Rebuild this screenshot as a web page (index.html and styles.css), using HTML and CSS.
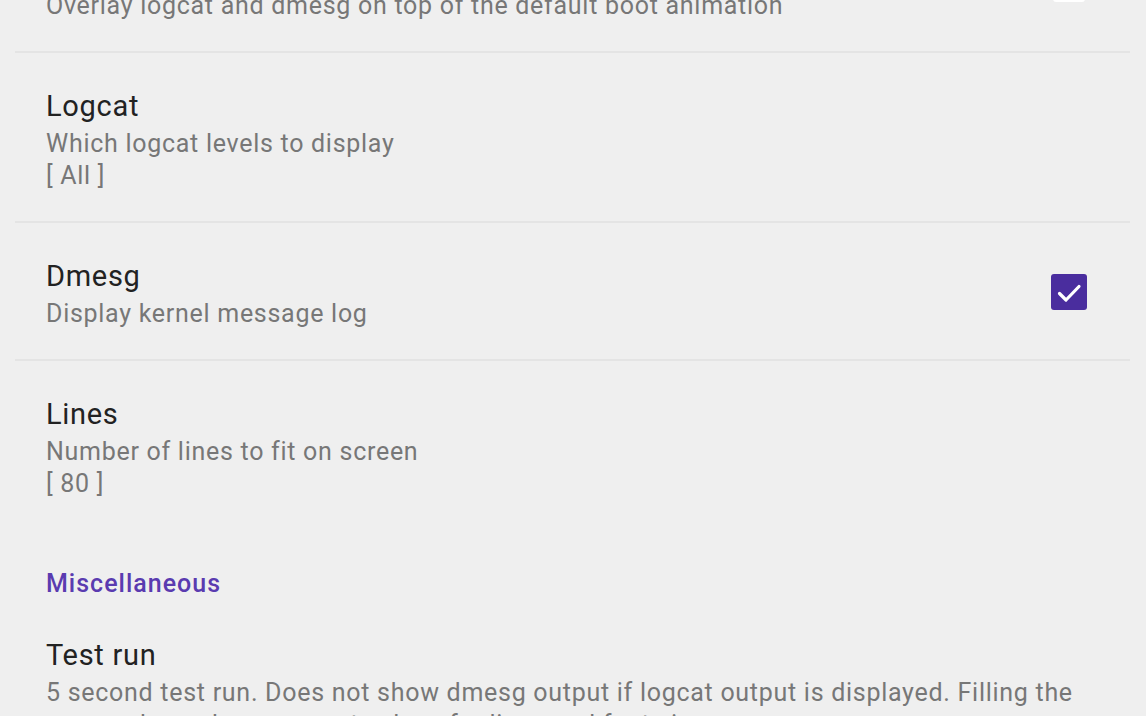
FILE: index.html
```html
<!DOCTYPE html>
<html lang="en">
<head>
  <meta charset="UTF-8">
  <meta name="viewport" content="width=device-width, initial-scale=1.0">
  <title>Boot animation settings</title>
  <link rel="stylesheet" href="styles.css">
</head>
<body>

<div class="prefs">
  <div class="pref">
    <div class="pref-text">
      <div class="pref-title">Show logs</div>
      <div class="pref-summary">Overlay logcat and dmesg on top of the default boot animation</div>
    </div>
    <span class="check check-white"></span>
  </div>
  <div class="divider"></div>

  <div class="pref">
    <div class="pref-text">
      <div class="pref-title">Logcat</div>
      <div class="pref-summary">Which logcat levels to display</div>
      <div class="pref-summary">[ All ]</div>
    </div>
  </div>
  <div class="divider"></div>

  <div class="pref">
    <div class="pref-text">
      <div class="pref-title">Dmesg</div>
      <div class="pref-summary">Display kernel message log</div>
    </div>
    <span class="check check-on">
      <svg width="36" height="36" viewBox="0 0 36 36">
        <path d="M8.5 19.5 L15 26 L28 12.5" fill="none" stroke="#fff" stroke-width="3.2" stroke-linecap="round" stroke-linejoin="round"/>
      </svg>
    </span>
  </div>
  <div class="divider"></div>

  <div class="pref">
    <div class="pref-text">
      <div class="pref-title">Lines</div>
      <div class="pref-summary">Number of lines to fit on screen</div>
      <div class="pref-summary">[ 80 ]</div>
    </div>
  </div>

  <div class="category">Miscellaneous</div>

  <div class="pref">
    <div class="pref-text">
      <div class="pref-title">Test run</div>
      <div class="pref-summary">5 second test run. Does not show dmesg output if logcat output is displayed. Filling the screen depends on correct values for lines and font size</div>
    </div>
  </div>
</div>

</body>
</html>
```

FILE: styles.css
```css
body {
    margin: 0;
    padding: 0;
    background-color: #efefef;
    font-family: Roboto, "Noto Sans", sans-serif;
    overflow: hidden;
}

/* page is scrolled down a bit, first row is cut off */
.prefs {
    margin-top: -85px;
}

.pref {
    display: flex;
    align-items: center;
    padding: 31px 59px 29px 46px;
}

.pref-text {
    flex: 1;
    min-width: 0;
}

.pref-title {
    font-size: 29px;
    line-height: 44px;
    letter-spacing: 0.7px;
    color: #222;
}

.pref-summary {
    font-size: 25px;
    line-height: 32px;
    letter-spacing: 0.72px;
    color: #777;
}

.divider {
    height: 2px;
    margin: 0 16px 0 15px;
    background-color: #e4e4e4;
}

.check {
    flex: none;
    display: block;
    width: 36px;
    height: 36px;
    border-radius: 3px;
    margin-left: 20px;
}

.check-on {
    background-color: #4a2d9e;
}

.check-on svg {
    display: block;
}

.check-white {
    width: 32px;
    margin-right: 2px;
    background-color: #fff;
}

.category {
    font-size: 25px;
    font-weight: 500;
    line-height: 32px;
    letter-spacing: 1px;
    color: #5a3bb0;
    padding: 39px 46px 2px;
}
```
